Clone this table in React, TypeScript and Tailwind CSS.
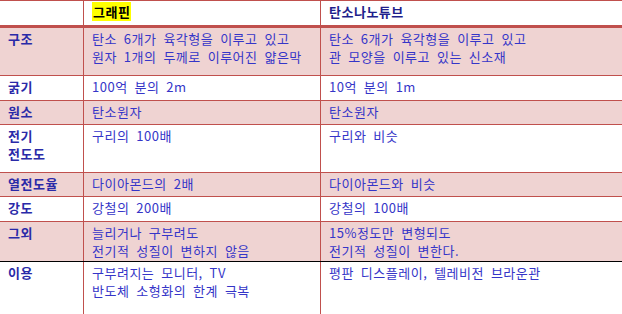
type Row = {
  label: string[];
  graphene: string[];
  nanotube: string[];
  h: string;
  shaded: boolean;
  border: string;
};

const rows: Row[] = [
  {
    label: ['구조'],
    graphene: ['탄소 6개가 육각형을 이루고 있고', '원자 1개의 두께로 이루어진 얇은막'],
    nanotube: ['탄소 6개가 육각형을 이루고 있고', '관 모양을 이루고 있는 신소재'],
    h: 'h-[48px]',
    shaded: true,
    border: 'border-[#c0504d]',
  },
  {
    label: ['굵기'],
    graphene: ['100억 분의 2m'],
    nanotube: ['10억 분의 1m'],
    h: 'h-[25px]',
    shaded: false,
    border: 'border-[#c0504d]',
  },
  {
    label: ['원소'],
    graphene: ['탄소원자'],
    nanotube: ['탄소원자'],
    h: 'h-[24px]',
    shaded: true,
    border: 'border-[#c0504d]',
  },
  {
    label: ['전기', '전도도'],
    graphene: ['구리의 100배'],
    nanotube: ['구리와 비슷'],
    h: 'h-[48px]',
    shaded: false,
    border: 'border-[#c0504d]',
  },
  {
    label: ['열전도율'],
    graphene: ['다이아몬드의 2배'],
    nanotube: ['다이아몬드와 비슷'],
    h: 'h-[24px]',
    shaded: true,
    border: 'border-[#c0504d]',
  },
  {
    label: ['강도'],
    graphene: ['강철의 200배'],
    nanotube: ['강철의 100배'],
    h: 'h-[25px]',
    shaded: false,
    border: 'border-[#c0504d]',
  },
  {
    label: ['그외'],
    graphene: ['늘리거나 구부려도', '전기적 성질이 변하지 않음'],
    nanotube: ['15%정도만 변형되도', '전기적 성질이 변한다.'],
    h: 'h-[40px]',
    shaded: true,
    border: 'border-black',
  },
];

function Lines({ lines }: { lines: string[] }) {
  return (
    <>
      {lines.map((l, i) => (
        <div key={i} className="whitespace-nowrap">{l}</div>
      ))}
    </>
  );
}

export default function App() {
  return (
    <div
      className="w-[622px] h-[314px] overflow-hidden bg-white flex flex-col text-[13px] leading-[18px] tracking-[0.5px] [word-spacing:3.5px] text-[#3535c8]"
      style={{ fontFamily: '"Noto Sans CJK KR", "Noto Sans", sans-serif' }}
    >
      {/* header */}
      <div className="flex h-[28px] shrink-0 border-t border-b-[3px] border-[#c0504d]">
        <div className="w-[84px] border-r border-[#c0504d]" />
        <div className="w-[237px] border-r border-[#c0504d] pl-2 pt-[2px]">
          <span className="bg-[#ffff00] font-bold text-black px-px">그래핀</span>
        </div>
        <div className="flex-1 pl-2 pt-[2px] font-bold text-[#1f1f8c]">탄소나노튜브</div>
      </div>

      {rows.map((r) => (
        <div
          key={r.label.join('')}
          className={`flex shrink-0 border-b ${r.h} ${r.border} ${r.shaded ? 'bg-[#efd3d2]' : 'bg-white'}`}
        >
          <div className="w-[84px] border-r border-[#c0504d] pl-2 pt-[2px] font-bold text-[#2a2aa8]">
            <Lines lines={r.label} />
          </div>
          <div className="w-[237px] border-r border-[#c0504d] pl-2 pt-[2px]">
            <Lines lines={r.graphene} />
          </div>
          <div className="flex-1 pl-2 pt-[2px]">
            <Lines lines={r.nanotube} />
          </div>
        </div>
      ))}

      <div className="flex flex-1">
        <div className="w-[84px] border-r border-[#c0504d] pl-2 pt-[2px] font-bold text-[#2a2aa8]">이용</div>
        <div className="w-[237px] border-r border-[#c0504d] pl-2 pt-[2px]">
          <div>구부려지는 모니터, TV</div>
          <div>반도체 소형화의 한계 극복</div>
        </div>
        <div className="flex-1 pl-2 pt-[2px]">평판 디스플레이, 텔레비전 브라운관</div>
      </div>
    </div>
  );
}
